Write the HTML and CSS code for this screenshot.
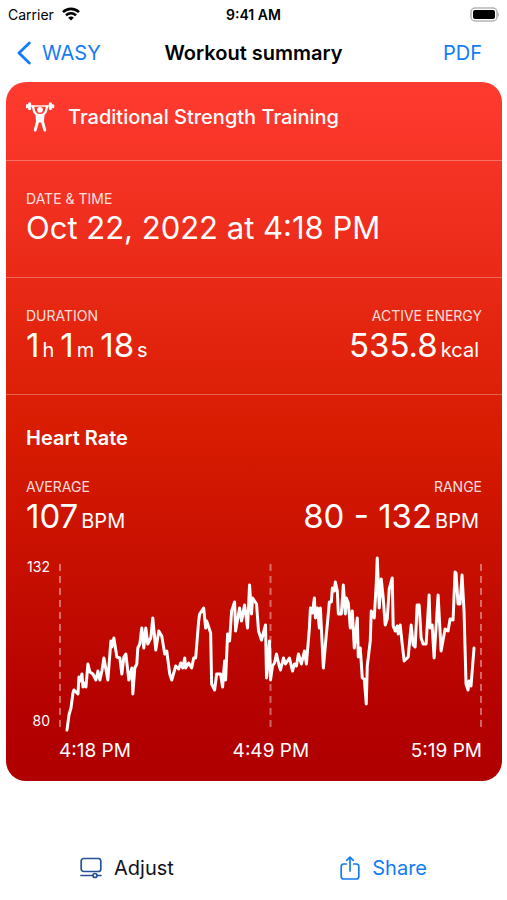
FILE: index.html
```
<!DOCTYPE html>
<html lang="en">
  <head>
    <meta charset="utf-8">
    <meta name="viewport" content="width=device-width, initial-scale=1">
    <title>Workout summary</title>
    <link rel="stylesheet" href="styles.css">
  </head>
  <body>
    <div class="status-bar">
      <div class="carrier">
        <span>Carrier</span>
        <svg width="18" height="16" viewBox="0 0 18 16" fill="none" stroke="#000" stroke-width="2.6">
          <path d="M1 6.2C5.4 1.8 12.6 1.8 17 6.2"/>
          <path d="M4 9.4C6.8 6.6 11.2 6.6 14 9.4"/>
          <path d="M6.2 11.7C7.8 10.2 10.2 10.2 11.8 11.7L9 14.5Z" fill="#000" stroke="none"/>
        </svg>
      </div>
      <div class="clock">9:41 AM</div>
      <div class="battery">
        <svg width="31" height="15" viewBox="0 0 31 15">
          <rect x="3" y="1" width="26" height="13" rx="4" fill="#fff" stroke="#b5b5b5" stroke-width="1.5"/>
          <rect x="5" y="3" width="22" height="9" rx="2" fill="#000"/>
          <path d="M29.5 5v5c2-1 2-4 0-5z" fill="#b5b5b5"/>
        </svg>
      </div>
    </div>

    <header class="nav-bar">
      <a href="#" class="back">
        <svg width="14" height="24" viewBox="0 0 14 24" fill="none" stroke="currentColor" stroke-width="2.8" stroke-linecap="round" stroke-linejoin="round">
          <path d="M12.3 2L2 12l10.3 10"/>
        </svg>
        <span>WASY</span>
      </a>
      <h1>Workout summary</h1>
      <a href="#" class="pdf">PDF</a>
    </header>

    <main class="card">
      <section class="workout-type">
        <svg width="30" height="32" viewBox="1 0 30 32" fill="#fff">
          <path d="M4 5H26" stroke="#fff" stroke-width="1.4"/>
          <rect x="0.8" y="3.2" width="2.6" height="4" rx="1"/>
          <rect x="3" y="1.2" width="3.2" height="8" rx="1.6"/>
          <rect x="23.8" y="1.2" width="3.2" height="8" rx="1.6"/>
          <rect x="26.6" y="3.2" width="2.6" height="4" rx="1"/>
          <circle cx="15" cy="8.8" r="2.9"/>
          <path d="M8 5.5L9.2 10.8 12.2 14.2M22 5.5L20.8 10.8 17.8 14.2" fill="none" stroke="#fff" stroke-width="2.3" stroke-linecap="round" stroke-linejoin="round"/>
          <path d="M10.4 12C13.4 13.2 16.6 13.2 19.6 12L18.9 21.5H11.1Z"/>
          <path d="M12.7 20L10.2 29.2M17.3 20L19.8 29.2" stroke="#fff" stroke-width="2.9" stroke-linecap="round"/>
        </svg>
        <h2>Traditional Strength Training</h2>
      </section>

      <section class="row">
        <div class="stat">
          <div class="label">DATE &amp; TIME</div>
          <div class="value date">Oct 22, 2022 at 4:18 PM</div>
        </div>
      </section>

      <section class="row">
        <div class="stat">
          <div class="label">DURATION</div>
          <div class="value duration">1<small>h</small>1<small>m</small>18<small>s</small></div>
        </div>
        <div class="stat right">
          <div class="label">ACTIVE ENERGY</div>
          <div class="value">535.8<small>kcal</small></div>
        </div>
      </section>

      <section class="heart-rate">
        <h3>Heart Rate</h3>
        <div class="stats">
          <div class="stat">
            <div class="label">AVERAGE</div>
            <div class="value">107<small>BPM</small></div>
          </div>
          <div class="stat right">
            <div class="label">RANGE</div>
            <div class="value">80 - 132<small>BPM</small></div>
          </div>
        </div>
        <div class="chart">
          <div class="y-axis">
            <span>132</span>
            <span>80</span>
          </div>
          <div class="plot">
            <svg viewBox="0 0 424 180" preserveAspectRatio="none">
              <path class="grid" d="M1 8V176M212 8V176M423 8V176"/>
              <polyline class="line" points="8,174 10,159 12,152 14,137 15,134 19,138 20,121 21,125 23,118 24,131 26,127 27,131 29,108 31,116 34,118 37,124 39,115 41,124 43,115 45,102 49,124 52,85 53,91 55,82 58,101 61,102 63,118 65,101 67,98 70,124 73,112 74,138 76,112 78,108 79,92 81,88 83,72 85,92 87,72 89,88 92,82 94,62 97,94 100,75 103,80 106,98 108,95 111,118 113,124 117,110 120,113 122,107 124,112 126,102 127,112 130,107 133,112 135,102 137,102
                140,65 141,58 143,55 145,52 147,72 148,65 152,77 153,128 156,134 158,118 162,118 164,131 166,105 167,124 169,78 171,85 173,55 176,46 177,75 181,52 183,65 186,49 189,72 191,29 193,58 194,42 198,48 200,75 203,84 207,69 208,122 211,85 212,124 214,110 216,107 218,98 220,107 222,114 225,102 227,108 231,102 234,115 236,108 238,110 240,98 243,108 246,95 248,108
                251,72 252,52 254,57 256,42 257,62 259,52 261,72 262,52 265,112 268,78 269,68 271,46 273,46 274,32 276,35 277,26 279,35 280,58 283,58 285,29 287,58 288,42 290,47 292,72 294,55 296,92 299,62 300,101 302,92 304,122 306,123 308,148 309,110 312,85 313,55 316,62 318,28 319,2 321,52 323,23 325,42 327,69 329,63 331,33 334,22
                335,70 337,75 339,70 340,78 342,69 344,88 346,105 350,101 353,69 355,89 357,91 359,49 361,49 363,82 365,88 368,88 371,39 372,72 374,69 376,102 380,39 383,95 387,73 390,75 392,63 395,64 397,16 398,17 400,48 402,48 404,19 406,55 408,128 410,134 411,125 413,130 416,92"/>
            </svg>
            <div class="x-axis">
              <span>4:18 PM</span>
              <span>4:49 PM</span>
              <span>5:19 PM</span>
            </div>
          </div>
        </div>
      </section>
    </main>

    <footer class="toolbar">
      <button class="adjust">
        <svg width="22" height="22" viewBox="0 0 22 22" fill="none" stroke="#255296" stroke-width="1.7" stroke-linecap="round">
          <rect x="1.2" y="1.5" width="19.6" height="13" rx="2.5"/>
          <path d="M1 18.5H12.4M17.6 18.5H21"/>
          <circle cx="15" cy="18.5" r="2"/>
        </svg>
        Adjust
      </button>
      <button class="share">
        <svg width="20" height="26" viewBox="0 0 20 26" fill="none" stroke="currentColor" stroke-width="1.7" stroke-linecap="round" stroke-linejoin="round">
          <path d="M6.3 9H3.7C2.2 9 1.2 10 1.2 11.5V21.5C1.2 23 2.2 24 3.7 24H16.3C17.8 24 18.8 23 18.8 21.5V11.5C18.8 10 17.8 9 16.3 9H13.7"/>
          <path d="M10 16V2.5M6.8 5.3L10 2.2 13.2 5.3"/>
        </svg>
        Share
      </button>
    </footer>
  </body>
</html>
```
FILE: styles.css
```
* {
  box-sizing: border-box;
}
body {
  margin: 0;
  background-color: white;
  color: black;
  font-family: Inter, "Liberation Sans", sans-serif;
  font-size: 20px;
}
h1, h2, h3 {
  margin: 0;
  font-size: 20px;
  line-height: 24px;
}
h1, h3 {
  font-weight: 600;
}
h2 {
  font-weight: 500;
}
svg {
  display: block;
  flex: none;
}
a {
  color: #127cf5;
  text-decoration: none;
}

.status-bar, .nav-bar {
  display: grid;
  grid-template-columns: 1fr auto 1fr;
  align-items: center;
}
.status-bar {
  height: 28px;
  padding: 0 8px;
  font-size: 14px;
}
.carrier {
  display: flex;
  align-items: center;
  gap: 8px;
}
.clock {
  font-weight: 600;
}
.battery {
  justify-self: end;
}

.nav-bar {
  height: 54px;
  padding: 0 17px 4px;
}
.back {
  display: flex;
  align-items: center;
  gap: 11px;
}
.pdf {
  justify-self: end;
  margin-right: 8px;
}

.card {
  margin: 0 5px 0 6px;
  border-radius: 20px;
  background: linear-gradient(#ff3b30, #d81c02 50%, #b30000 92%, #b00000);
  color: white;
}
.workout-type, .row, .heart-rate {
  padding: 0 20px;
}
.row, .heart-rate {
  border-top: 1px solid rgba(255, 255, 255, 0.3);
}
.workout-type {
  display: flex;
  align-items: center;
  gap: 12px;
  height: 78px;
  padding-bottom: 8px;
}
.row {
  display: flex;
  justify-content: space-between;
  align-items: center;
  height: 117px;
}
.right {
  text-align: right;
}
.label {
  font-size: 14px;
  line-height: 18px;
  opacity: 0.85;
}
.value {
  font-size: 33px;
  font-weight: 400;
  line-height: 40px;
}
.date {
  font-size: 31px;
}
.value small {
  margin: 0 3px;
  font-size: 20px;
  line-height: 20px;
}
.duration small {
  margin-right: 6px;
}

.heart-rate h3 {
  padding: 31px 0 28px;
}
.stats {
  display: flex;
  justify-content: space-between;
}
.chart {
  display: flex;
  margin-top: 20px;
  padding-bottom: 18px;
}
.y-axis {
  display: flex;
  flex-direction: column;
  justify-content: space-between;
  width: 33px;
  height: 176px;
  padding-right: 9px;
  font-size: 14px;
  line-height: 22px;
  text-align: right;
}
.plot {
  flex: 1;
}
.plot svg {
  width: 100%;
  height: 180px;
}
.grid {
  stroke: rgba(255, 255, 255, 0.4);
  stroke-width: 2;
  stroke-dasharray: 7 5;
}
.line {
  fill: none;
  stroke: white;
  stroke-width: 3;
  stroke-linecap: round;
  stroke-linejoin: round;
}
.x-axis {
  display: flex;
  justify-content: space-between;
  padding-top: 3px;
  font-size: 19px;
  line-height: 24px;
}

.toolbar {
  display: flex;
  justify-content: space-between;
  margin-top: 72px;
  padding: 0 80px;
}
button {
  display: flex;
  align-items: center;
  gap: 12px;
  height: 30px;
  padding: 0;
  border: none;
  background: none;
  font-family: inherit;
  font-size: 20px;
}
.adjust {
  color: #10131c;
}
.share {
  color: #127cf5;
}
```
